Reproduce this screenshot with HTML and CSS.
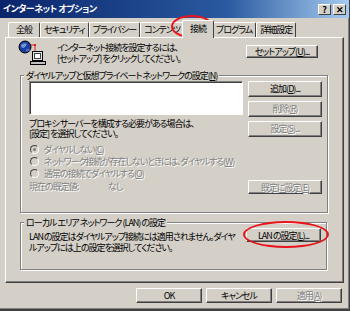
FILE: index.html
```html
<!DOCTYPE html>
<html lang="ja">
<head>
  <meta charset="UTF-8" />
  <title>インターネット オプション</title>
  <link rel="stylesheet" href="styles.css">
</head>
<body>
  <div class="dialog">
    <div class="titlebar">
      <span class="title">インターネット オプション</span>
      <div class="tb-btns">
        <span class="tb-btn">?</span>
        <span class="tb-btn">✕</span>
      </div>
    </div>

    <div class="tabs">
      <span class="tab">全般</span>
      <span class="tab">セキュリティ</span>
      <span class="tab">プライバシー</span>
      <span class="tab">コンテンツ</span>
      <span class="tab active">接続</span>
      <span class="tab">プログラム</span>
      <span class="tab">詳細設定</span>
    </div>

    <div class="panel">
      <div class="setup-row">
        <svg class="net-icon" width="32" height="26" viewBox="0 0 32 26">
          <circle cx="7" cy="7" r="6" fill="#1c3c9c" stroke="#000" stroke-width="1"/>
          <path d="M3 5 Q6 2 9 4 Q8 7 5 8 Q3 8 3 5Z" fill="#6f93d8"/>
          <path d="M8 9 Q11 8 12 10 Q10 12 8 11Z" fill="#4b6fc4"/>
          <path d="M13 5 H17 V11" fill="none" stroke="#e02020" stroke-width="1"/>
          <rect x="16" y="4" width="2" height="2" fill="#e02020"/>
          <rect x="14.5" y="11.5" width="10" height="9" fill="#e8e8e8" stroke="#000"/>
          <rect x="16.5" y="13.5" width="6" height="5" fill="#fff" stroke="#404040"/>
          <rect x="12.5" y="21.5" width="15" height="3" fill="#c0c0c0" stroke="#000"/>
        </svg>
        <p class="setup-text">インターネット接続を設定するには、<br>[セットアップ] をクリックしてください。</p>
        <button class="btn setup-btn">セットアップ(<u>U</u>)...</button>
      </div>

      <fieldset class="group dialup">
        <legend>ダイヤルアップと仮想プライベート ネットワークの設定(<u>N</u>)</legend>
        <div class="dial-top">
          <div class="dial-left">
            <div class="listbox"></div>
            <p class="proxy">プロキシ サーバーを構成する必要がある場合は、<br>[設定] を選択してください。</p>
          </div>
          <div class="btn-col">
            <button class="btn">追加(<u>D</u>)...</button>
            <button class="btn off">削除(<u>R</u>)</button>
            <button class="btn off">設定(<u>S</u>)...</button>
          </div>
        </div>
        <ul class="radios">
          <li class="checked"><span class="radio"></span>ダイヤルしない(<u>C</u>)</li>
          <li><span class="radio"></span>ネットワーク接続が存在しないときには、ダイヤルする(<u>W</u>)</li>
          <li><span class="radio"></span>通常の接続でダイヤルする(<u>O</u>)</li>
        </ul>
        <div class="default-row">
          <span class="off-text label">現在の既定値:</span>
          <span class="off-text">なし</span>
          <button class="btn off default-btn">既定に設定(<u>E</u>)</button>
        </div>
      </fieldset>

      <fieldset class="group lan">
        <legend>ローカル エリア ネットワーク (LAN) の設定</legend>
        <div class="lan-row">
          <p class="lan-text">LAN の設定はダイヤルアップ接続には適用されません。ダイヤ<br>ルアップには上の設定を選択してください。</p>
          <button class="btn lan-btn">LAN の設定(<u>L</u>)...</button>
        </div>
      </fieldset>
    </div>

    <div class="footer">
      <button class="btn">OK</button>
      <button class="btn">キャンセル</button>
      <button class="btn off">適用(<u>A</u>)</button>
    </div>

    <span class="mark mark-tab"></span>
    <span class="mark mark-lan"></span>
  </div>
</body>
</html>
```
FILE: styles.css
```css
* {
  box-sizing: border-box;
}
body {
  margin: 0;
  background: #d4d0c8;
  font-family: "Noto Sans CJK JP", sans-serif;
  font-size: 9px;
  letter-spacing: -1px;
  font-feature-settings: "palt";
  color: #000;
}
p {
  margin: 0;
}
u {
  text-decoration: underline;
}
.dialog {
  position: relative;
  width: 350px;
  height: 311px;
  background: #d4d0c8;
  border-right: 1px solid #404040;
  border-bottom: 2px solid #404040;
  box-shadow: inset -1px -1px #808080;
  overflow: hidden;
}
.titlebar {
  display: flex;
  align-items: center;
  height: 18px;
  padding: 0 3px;
  background: linear-gradient(to right, #0a246a, #2a5aa0 65%, #a6caf0);
}
.title {
  color: #fff;
  font-weight: bold;
  letter-spacing: -0.5px;
  line-height: 18px;
}
.tb-btns {
  margin-left: auto;
  display: flex;
  gap: 2px;
}
.tb-btn {
  width: 13px;
  height: 11px;
  background: #d4d0c8;
  border: 1px solid;
  border-color: #fff #404040 #404040 #fff;
  font-size: 9px;
  font-weight: bold;
  line-height: 9px;
  text-align: center;
  letter-spacing: 0;
}
.tabs {
  display: flex;
  align-items: flex-end;
  height: 19px;
  padding-left: 8px;
}
.tab {
  position: relative;
  min-width: 32px;
  height: 15px;
  padding: 0 3px;
  line-height: 13px;
  text-align: center;
  border: 1px solid;
  border-bottom: none;
  border-color: #fff #404040 #404040 #fff;
  border-radius: 2px 2px 0 0;
}
.tab.active {
  z-index: 1;
  height: 18px;
  margin: 0 -2px -1px;
  padding: 0 5px;
  line-height: 16px;
  background: #d4d0c8;
}
.panel {
  height: 246px;
  margin: 0 5px;
  padding: 0 16px 0 14px;
  border: 1px solid;
  border-color: #fff #404040 #404040 #fff;
  box-shadow: inset -1px -1px #808080;
}
.setup-row {
  display: flex;
  height: 30px;
  margin-top: 2px;
}
.net-icon {
  margin-left: -2px;
}
.setup-text {
  margin: 2px 0 0 7px;
  line-height: 11px;
  white-space: nowrap;
}
.btn {
  height: 16px;
  padding: 0;
  font-family: inherit;
  font-size: 9px;
  letter-spacing: -1px;
  font-feature-settings: "palt";
  color: #000;
  background: #d4d0c8;
  border: 1px solid;
  border-color: #fff #404040 #404040 #fff;
  box-shadow: inset -1px -1px #808080;
  line-height: 12px;
  white-space: nowrap;
}
.btn.off, .off-text {
  color: #808080;
  text-shadow: 1px 1px #fff;
}
.setup-btn {
  width: 72px;
  height: 13px;
  line-height: 10px;
  margin: 5px 9px 0 auto;
}
.group {
  margin: 0;
  padding: 0 5px 0 8px;
  border: 1px solid #808080;
  box-shadow: 1px 1px #fff, inset 1px 1px #fff;
}
.group legend {
  padding: 0 2px;
  margin-left: -5px;
  line-height: 11px;
  background: #d4d0c8;
  white-space: nowrap;
}
.dialup {
  height: 143px;
}
.dial-top {
  display: flex;
  gap: 5px;
}
.listbox {
  width: 214px;
  height: 34px;
  background: #fff;
  border: 1px solid;
  border-color: #808080 #fff #fff #808080;
  box-shadow: inset 1px 1px #404040;
}
.proxy {
  margin-top: 4px;
  line-height: 10px;
  white-space: nowrap;
}
.btn-col {
  display: flex;
  flex-direction: column;
  gap: 4px;
}
.btn-col .btn {
  width: 74px;
}
.radios {
  list-style: none;
  margin: 4px 0 0;
  padding: 0;
}
.radios li {
  display: flex;
  align-items: center;
  height: 12px;
  color: #808080;
  text-shadow: 1px 1px #fff;
  white-space: nowrap;
}
.radio {
  position: relative;
  width: 9px;
  height: 9px;
  margin: 0 5px 0 1px;
  border-radius: 50%;
  border: 1px solid;
  border-color: #404040 #fff #fff #404040;
  background: #d4d0c8;
}
.checked .radio::after {
  content: "";
  position: absolute;
  left: 2px;
  top: 2px;
  width: 3px;
  height: 3px;
  border-radius: 50%;
  background: #808080;
}
.default-row {
  display: flex;
  align-items: flex-start;
  margin-top: 1px;
}
.default-row .label {
  width: 79px;
  line-height: 13px;
}
.default-row span {
  line-height: 13px;
}
.default-btn {
  width: 74px;
  height: 14px;
  line-height: 11px;
  margin-left: auto;
}
.lan {
  height: 53px;
  margin-top: 4px;
}
.lan-row {
  display: flex;
}
.lan-text {
  margin-top: 4px;
  line-height: 10.5px;
  white-space: nowrap;
}
.lan-btn {
  width: 75px;
  height: 14px;
  line-height: 11px;
  margin: 0 0 0 auto;
}
.footer {
  display: flex;
  justify-content: flex-end;
  gap: 4px;
  padding: 5px 7px 0 0;
}
.footer .btn {
  width: 66px;
  height: 15px;
}
.mark {
  position: absolute;
  border: 2px solid #e8141c;
  border-radius: 50%;
}
.mark-tab {
  left: 171px;
  top: 15px;
  width: 42px;
  height: 23px;
}
.mark-lan {
  left: 243px;
  top: 221px;
  width: 86px;
  height: 27px;
}
```
